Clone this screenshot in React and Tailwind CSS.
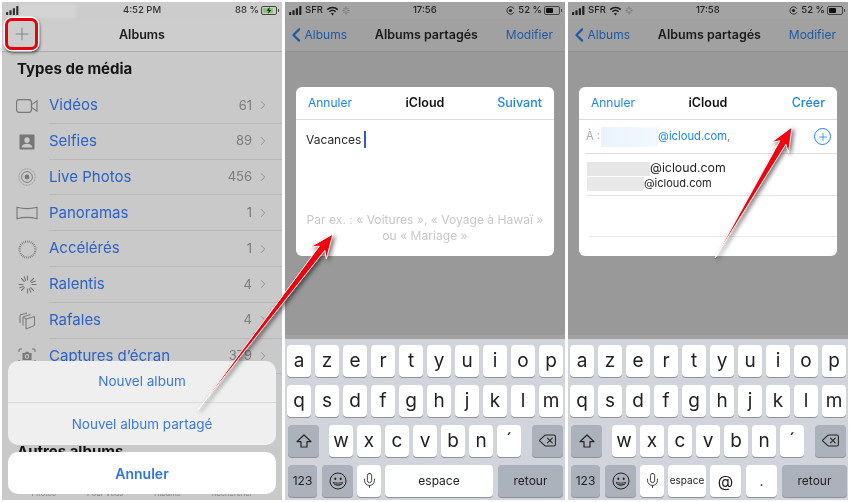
import React from "react";
import { ChevronLeft, ChevronRight, Delete, Mic, Plus } from "lucide-react";

const font = "font-['Inter','Liberation_Sans',sans-serif]";

const Signal = ({ color = "#333" }) => (
  <svg width="13" height="9" viewBox="0 0 13 9" fill={color}>
    <rect x="0" y="6" width="2.2" height="3" rx="0.4" />
    <rect x="3.4" y="4.2" width="2.2" height="4.8" rx="0.4" />
    <rect x="6.8" y="2.2" width="2.2" height="6.8" rx="0.4" />
    <rect x="10.2" y="0" width="2.2" height="9" rx="0.4" />
  </svg>
);

const Wifi = () => (
  <svg width="13" height="10" viewBox="0 0 12 10" fill="none" stroke="#1a1a1a" strokeWidth="1.5">
    <path d="M0.8 3.6C3.8 0.8 8.2 0.8 11.2 3.6" />
    <path d="M2.9 5.7C4.7 4 7.3 4 9.1 5.7" />
    <path d="M6 9.6 L4.4 7.6C5.4 6.9 6.6 6.9 7.6 7.6Z" fill="#1a1a1a" stroke="none" />
  </svg>
);

const Battery = ({ level, color, bolt }) => (
  <div className="flex items-center">
    <div className="relative h-[9px] w-[16px] rounded-[2px] border border-[#444] p-[1px]">
      <div className={`h-full rounded-[1px] ${color} ${level}`} />
      {bolt && (
        <svg className="absolute left-[4px] top-0" width="6" height="7" viewBox="0 0 6 7" fill="#111">
          <path d="M3.6 0 L0.8 3.8 H2.7 L2.2 7 L5.2 2.9 H3.3Z" />
        </svg>
      )}
    </div>
    <div className="ml-[1px] h-[3px] w-[1px] bg-[#444]" />
  </div>
);

// icons of the media list
const icons = {
  video: (
    <svg width="22" height="14" viewBox="0 0 22 14" fill="none" stroke="#777" strokeWidth="1.1">
      <rect x="0.6" y="0.6" width="14.8" height="12.8" rx="2.6" />
      <path d="M15.6 5.6 L21 1.8 V12.2 L15.6 8.4Z" />
    </svg>
  ),
  selfie: (
    <svg width="16" height="16" viewBox="0 0 16 16" fill="#777">
      <path fillRule="evenodd" d="M1.5 0.5H14.5A1 1 0 0 1 15.5 1.5V14.5A1 1 0 0 1 14.5 15.5H1.5A1 1 0 0 1 0.5 14.5V1.5A1 1 0 0 1 1.5 0.5ZM8 3.2A2.7 2.9 0 1 0 8 9A2.7 2.9 0 1 0 8 3.2ZM2.6 13.6H13.4C13.1 11 11 9.8 8 9.8S2.9 11 2.6 13.6Z" />
    </svg>
  ),
  live: (
    <svg width="18" height="18" viewBox="0 0 18 18" fill="none" stroke="#777">
      <circle cx="9" cy="9" r="8.2" strokeWidth="0.6" strokeDasharray="1 0.6" />
      <circle cx="9" cy="9" r="5.4" strokeWidth="0.9" />
      <circle cx="9" cy="9" r="2.4" fill="#777" stroke="none" />
    </svg>
  ),
  panorama: (
    <svg width="22" height="14" viewBox="0 0 22 14" fill="none" stroke="#777" strokeWidth="1.1">
      <path d="M1 1.2C7.5 3 14.5 3 21 1.2V12.8C14.5 11 7.5 11 1 12.8Z" />
    </svg>
  ),
  timelapse: (
    <svg width="19" height="19" viewBox="0 0 19 19" fill="none" stroke="#777" strokeWidth="2.2">
      <circle cx="9.5" cy="9.5" r="8" strokeDasharray="0.8 1.05" />
    </svg>
  ),
  slomo: (
    <svg width="19" height="19" viewBox="0 0 19 19" stroke="#777" strokeWidth="1.1" strokeLinecap="round">
      <path d="M9.5 1V5M9.5 14V18M1 9.5H5M14 9.5H18M3.5 3.5L6.3 6.3M12.7 12.7L15.5 15.5M15.5 3.5L12.7 6.3M6.3 12.7L3.5 15.5M6.3 1.7L7.6 5.4M12.7 17.3L11.4 13.6M1.7 12.7L5.4 11.4M17.3 6.3L13.6 7.6" />
    </svg>
  ),
  burst: (
    <svg width="18" height="18" viewBox="0 0 18 18" fill="none" stroke="#777" strokeWidth="1">
      <path d="M8 7 L16.5 4.5 V13.5 L8 17Z" />
      <path d="M5 13.5 V5 L12.5 2.4" />
      <path d="M2 11 V3 L9 1" />
      <path d="M8 7 L5.5 5.5" />
    </svg>
  ),
  shot: (
    <svg width="18" height="16" viewBox="0 0 18 16" fill="none" stroke="#777" strokeWidth="1.1">
      <path d="M1 4V2A1 1 0 0 1 2 1H4M14 1H16A1 1 0 0 1 17 2V4M17 12V14A1 1 0 0 1 16 15H14M4 15H2A1 1 0 0 1 1 14V12" />
      <path d="M4.5 5H7L7.8 3.8H10.2L11 5H13.5V12H4.5Z" fill="#777" stroke="none" />
      <circle cx="9" cy="8.4" r="1.8" stroke="#ccc" />
    </svg>
  ),
};

const rows = [
  ["video", "Vidéos", "61"],
  ["selfie", "Selfies", "89"],
  ["live", "Live Photos", "456"],
  ["panorama", "Panoramas", "1"],
  ["timelapse", "Accélérés", "1"],
  ["slomo", "Ralentis", "4"],
  ["burst", "Rafales", "4"],
  ["shot", "Captures d’écran", "379"],
];

const MediaRow = ({ icon, label, count }) => (
  <div className="flex h-[35.8px]">
    <div className="flex w-[47px] items-center justify-center pl-[3px]">{icons[icon]}</div>
    <div className="flex flex-1 items-center border-b border-[#b8b8b8]">
      <span className="flex-1 text-[15px] text-[#2c62c6]">{label}</span>
      <span className="text-[13px] text-[#7c7c7c]">{count}</span>
      <ChevronRight className="ml-[4px] mr-[12px] text-[#8d8d8d]" size={14} strokeWidth={1.6} />
    </div>
  </div>
);

const AlbumsPhone = () => (
  <div className="relative flex h-[498px] w-[280px] flex-col overflow-hidden bg-[#c9c9c9]">
    <div className="flex h-[17px] items-center bg-[#cccccc] pl-[4px] pr-[3px] text-[9.5px] font-medium text-[#333]">
      <Signal />
      <div className="ml-[1px] h-[14px] w-[56px] bg-[#d4d4d4] blur-[1px]" />
      <span className="ml-[47px] flex-1">4:52 PM</span>
      <span className="mr-[2px]">88 %</span>
      <Battery level="w-[85%]" color="bg-[#7ecb6a]" bolt />
    </div>
    <div className="relative flex h-[33px] items-center justify-center border-b border-[#adadad] bg-[#cdcdcd]">
      <div className="absolute -top-[1px] left-[3px] flex h-[32px] w-[33px] items-center justify-center rounded-[7px] border-[3px] border-[#e8000b] shadow-[0_0_0_1.5px_#fff,1px_2px_3px_1px_#555]">
        <Plus size={20} strokeWidth={1} className="text-[#777]" />
      </div>
      <span className="text-[12.5px] font-semibold text-[#1a1a1a]">Albums</span>
    </div>
    <div className="flex flex-1 flex-col overflow-hidden">
      <div className="flex h-[36px] items-center pl-[15px] pb-[1px] text-[15px] font-bold text-[#151515]">Types de média</div>
      {rows.map(([icon, label, count]) => (
        <MediaRow key={label} icon={icon} label={label} count={count} />
      ))}
      <div className="mt-[68px] pl-[15px] text-[15px] font-bold leading-[20px] text-[#151515]">Autres albums</div>
    </div>
    <div className="flex h-[12px] shrink-0 items-center justify-around px-[14px] text-[7.5px] text-[#808080]">
      <span>Photos</span>
      <span>Pour Vous</span>
      <span>Albums</span>
      <span>Rechercher</span>
    </div>
    {/* action sheet */}
    <div className="absolute left-[6px] top-[359px] flex w-[268px] flex-col gap-[7px]">
      <div className="overflow-hidden rounded-[10px] bg-[#efefef]">
        <div className="flex h-[42px] items-center justify-center border-b border-[#dadada] text-[13.5px] text-[#3a78e6]">Nouvel album</div>
        <div className="flex h-[42px] items-center justify-center text-[13.5px] text-[#3a78e6]">Nouvel album partagé</div>
      </div>
      <div className="flex h-[42px] items-center justify-center rounded-[10px] bg-white text-[14px] font-semibold text-[#2f74ea]">Annuler</div>
    </div>
  </div>
);

const DarkHeader = ({ time }) => (
  <>
    <div className="flex h-[17px] items-center bg-[#a3a3a3] pl-[4px] pr-[3px] text-[9.5px] font-medium text-[#222]">
      <Signal color="#222" />
      <span className="ml-[3px] mr-[3px]">SFR</span>
      <Wifi />
      <svg className="ml-[3px]" width="8" height="9" viewBox="0 0 8 9" stroke="#666" strokeWidth="0.8">
        <path d="M4 0.5V3M4 6V8.5M0.5 4.5H2.5M5.5 4.5H7.5M1.5 2L3 3.5M6.5 7L5 5.5M6.5 2L5 3.5M1.5 7L3 5.5" />
      </svg>
      <span className="ml-[63px] flex-1">{time}</span>
      <svg className="mr-[3px]" width="9" height="9" viewBox="0 0 9 9" fill="none" stroke="#222" strokeWidth="0.9">
        <path d="M7.9 6.2A3.7 3.7 0 1 1 7.9 2.8" />
        <circle cx="4.5" cy="4.5" r="1.6" fill="#222" stroke="none" />
      </svg>
      <span className="mr-[2px]">52 %</span>
      <Battery level="w-[55%]" color="bg-[#111]" />
    </div>
    <div className="flex h-[33px] items-center justify-between border-b border-[#8f8f8f] bg-[#a1a1a1] pl-[3px] pr-[12px] text-[12px] text-[#1e5aa6]">
      <div className="flex w-[59px] items-center">
        <ChevronLeft size={24} strokeWidth={2.3} className="-mx-[3px]" />
        <span>Albums</span>
      </div>
      <span className="text-[12.5px] font-semibold text-[#1a1a1a]">Albums partagés</span>
      <span>Modifier</span>
    </div>
  </>
);

const Key = ({ children, dark, className = "w-[24px]", size = "text-[19px]" }) => (
  <div
    className={`flex h-[31.5px] shrink-0 items-center justify-center rounded-[4px] text-[#222] shadow-[0_1px_0_#8e9298] ${size} ${className} ${dark ? "bg-[#acb2bc]" : "bg-white"}`}
  >
    {children}
  </div>
);

const KeyRow = ({ letters, className = "" }) => (
  <div className={`flex gap-[4px] ${className}`}>
    {letters.split("").map((l) => (
      <Key key={l}>{l}</Key>
    ))}
  </div>
);

const ShiftIcon = () => (
  <svg width="16" height="14" viewBox="0 0 16 14" fill="none" stroke="#222" strokeWidth="1.2" strokeLinejoin="round">
    <path d="M8 1 L15 7.6 H11 V13 H5 V7.6 H1Z" />
  </svg>
);

const EmojiIcon = () => (
  <svg width="18" height="18" viewBox="0 0 18 18" fill="none" stroke="#222" strokeWidth="1">
    <circle cx="9" cy="9" r="8" />
    <ellipse cx="6.3" cy="6.8" rx="1" ry="1.4" fill="#222" stroke="none" />
    <ellipse cx="11.7" cy="6.8" rx="1" ry="1.4" fill="#222" stroke="none" />
    <path d="M3.8 9.8C6.5 11 11.5 11 14.2 9.8C13.8 15 4.2 15 3.8 9.8Z" fill="#222" stroke="none" />
    <path d="M5.2 10.9C7.5 11.6 10.5 11.6 12.8 10.9L12.4 12.1C10.5 12.6 7.5 12.6 5.6 12.1Z" fill="#acb2bc" stroke="none" />
  </svg>
);

const Keyboard = ({ bottom }) => (
  <div className="mt-auto flex flex-col">
    <div className="h-[4px] bg-[#a3a3a3]" />
    <div className="flex h-[161px] flex-col gap-[8.5px] bg-[#d1d4da] px-[2px] pt-[6px]">
      <KeyRow letters="azertyuiop" />
      <KeyRow letters="qsdfghjklm" />
      <div className="flex pl-[1px]">
        <Key dark className="w-[31px]"><ShiftIcon /></Key>
        <KeyRow letters="wxcvbn´" className="ml-[10px]" />
        <Key dark className="ml-[11px] w-[31px]"><Delete size={19} strokeWidth={1.3} /></Key>
      </div>
      {bottom}
    </div>
  </div>
);

const BottomRow = ({ children }) => (
  <div className="flex gap-[4px] pl-[1px]">
    <Key dark className="w-[29px]" size="text-[12px]">123</Key>
    <Key dark className="ml-[1px] w-[31px]"><EmojiIcon /></Key>
    <Key><Mic size={17} strokeWidth={1.2} /></Key>
    {children}
    <Key dark className="ml-[1px] w-[65px]" size="text-[12px]">retour</Key>
  </div>
);

const SheetHeader = ({ action }) => (
  <div className="flex h-[33px] items-center justify-between border-b border-[#dcdcdc] px-[12px] text-[12px] text-[#1a84f5]">
    <span className="w-[70px]">Annuler</span>
    <span className="text-[12.5px] font-semibold text-[#111]">iCloud</span>
    <span className="w-[70px] text-right text-[12.5px] font-medium">{action}</span>
  </div>
);

const NamePhone = () => (
  <div className="flex h-[498px] w-[280px] flex-col overflow-hidden bg-[#999]">
    <DarkHeader time="17:56" />
    <div className="mx-[11px] mt-[35px] flex h-[169px] flex-col rounded-[6px] bg-white">
      <SheetHeader action="Suivant" />
      <div className="flex items-center pl-[10px] pt-[11px] text-[12px] leading-[17px] text-[#2a2a2a]">
        Vacances
        <span className="ml-[3px] h-[17px] w-[2px] bg-[#3157dc]" />
      </div>
      <div className="mt-auto pb-[12px] text-center text-[12.1px] leading-[16px] text-[#c9c9c9]">
        Par ex. : « Voitures », « Voyage à Hawaï »
        <br />
        ou « Mariage »
      </div>
    </div>
    <Keyboard
      bottom={
        <BottomRow>
          <Key className="w-[108px]" size="text-[12px]">espace</Key>
        </BottomRow>
      }
    />
  </div>
);

const RecipientsPhone = () => (
  <div className="flex h-[498px] w-[280px] flex-col overflow-hidden bg-[#999]">
    <DarkHeader time="17:58" />
    <div className="mx-[11px] mt-[35px] flex h-[169px] flex-col rounded-[6px] bg-white">
      <SheetHeader action="Créer" />
      <div className="ml-[6px] flex h-[34px] items-center border-b border-[#dedede] pl-[1px] pr-[6px] text-[11.2px]">
        <span className="text-[#aaa]">À :</span>
        <div className="ml-[1px] h-[20px] w-[57px] bg-gradient-to-r from-[#eaf3fd] to-[#f3f8fe]" />
        <span className="text-[#1a84f5]">@icloud.com</span>
        <span className="text-[#888]">,</span>
        <div className="ml-auto flex h-[17px] w-[17px] items-center justify-center rounded-full border-[1.5px] border-[#1a84f5]">
          <Plus size={12} strokeWidth={1.6} className="text-[#1a84f5]" />
        </div>
      </div>
      <div className="ml-[8px] flex h-[42px] flex-col justify-center border-b border-[#e4e4e4] pt-[3px] text-[#222]">
        <div className="flex h-[15px] items-center text-[12.3px]">
          <div className="h-[14px] w-[63px] bg-[#e6e6e6] blur-[0.5px]" />
          @icloud.com
        </div>
        <div className="flex h-[15px] items-center text-[11px]">
          <div className="h-[14px] w-[57px] bg-[#e8e8e8] blur-[0.5px]" />
          @icloud.com
        </div>
      </div>
      <div className="ml-[10px] h-[41px] border-b border-[#e8e8e8]" />
    </div>
    <Keyboard
      bottom={
        <BottomRow>
          <Key className="w-[38px]" size="text-[10px]">espace</Key>
          <Key className="w-[31px]" size="text-[16px]">@</Key>
          <Key className="ml-[1px] w-[31px]" size="text-[14px]">.</Key>
        </BottomRow>
      }
    />
  </div>
);

// annotation arrow: tapered tail, swept head
const arrowPoints = (tx, ty, px, py) => {
  const len = Math.hypot(px - tx, py - ty);
  const ux = (px - tx) / len;
  const uy = (py - ty) / len;
  const at = (along, side) => `${(px - ux * along - uy * side).toFixed(1)},${(py - uy * along + ux * side).toFixed(1)}`;
  return [at(0, 0), at(24, 10), at(18, 3.5), at(len, 0), at(18, -3.5), at(24, -10)].join(" ");
};

const Arrow = ({ tail, tip }) => (
  <polygon points={arrowPoints(tail[0], tail[1], tip[0], tip[1])} fill="#f5000c" stroke="#fff" strokeWidth="1" strokeLinejoin="round" />
);

export default function App() {
  return (
    <div className={`relative flex h-[502px] w-[850px] gap-[3px] overflow-hidden bg-white px-[2px] pt-[2px] blur-[0.3px] ${font}`}>
      <AlbumsPhone />
      <NamePhone />
      <RecipientsPhone />
      <svg className="absolute left-0 top-0 drop-shadow-[2px_2px_2px_rgba(0,0,0,0.55)]" width="850" height="502" viewBox="0 0 850 502">
        <Arrow tail={[198, 410]} tip={[333, 234]} />
        <Arrow tail={[715, 258]} tip={[792, 127]} />
      </svg>
    </div>
  );
}
